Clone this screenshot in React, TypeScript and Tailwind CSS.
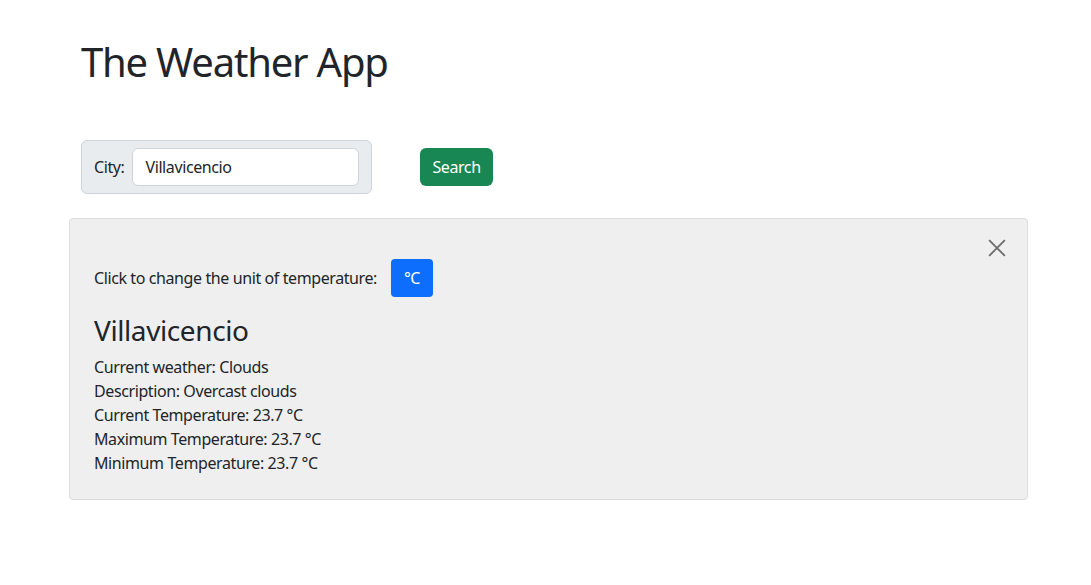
export default function App() {
  const lines = [
    'Current weather: Clouds',
    'Description: Overcast clouds',
    'Current Temperature: 23.7 °C',
    'Maximum Temperature: 23.7 °C',
    'Minimum Temperature: 23.7 °C',
  ]
  return (
    <div className="min-h-[585px] bg-white text-[#212529] font-['Noto_Sans',sans-serif] text-[16px] leading-6 tracking-[-0.025em]">
      <div className="w-[959px] ml-[69px] pt-[38px]">
        <h1 className="pl-3 text-[40px] leading-[48px] font-normal tracking-[-0.03em]">The Weather App</h1>
        <div className="flex items-center pl-3 mt-[54px]">
          <div className="flex items-center h-[54px] w-[291px] bg-[#e9ecef] border border-[#ced4da] rounded-[6px] pl-3 pr-3">
            <span>City:</span>
            <div className="ml-[8px] flex-1 h-[38px] bg-white border border-[#ced4da] rounded-[6px] flex items-center px-3">
              Villavicencio
            </div>
          </div>
          <button className="ml-[48px] h-[38px] w-[73px] rounded-[6px] bg-[#198754] text-white">Search</button>
        </div>
        <div className="mt-[24px] h-[282px] bg-[#efefef] border border-[#dcdcdc] rounded-[4px] relative pl-6 pt-[40px]">
          <button className="absolute right-[19px] top-[19px] w-5 h-5 text-[#6c6c6c]">
            <svg viewBox="0 0 16 16" className="w-[18px] h-[18px]" fill="none" stroke="currentColor" strokeWidth="1.6">
              <path d="M1 1 15 15M15 1 1 15" />
            </svg>
          </button>
          <div className="flex items-center">
            <span>Click to change the unit of temperature:</span>
            <button className="ml-[14px] h-[38px] w-[42px] rounded-[4px] bg-[#0d6efd] text-white">°C</button>
          </div>
          <h3 className="mt-[16px] text-[28px] leading-[34px] font-normal">Villavicencio</h3>
          <div className="mt-[8px]">
            {lines.map((l) => (
              <div key={l}>{l}</div>
            ))}
          </div>
        </div>
      </div>
    </div>
  )
}
